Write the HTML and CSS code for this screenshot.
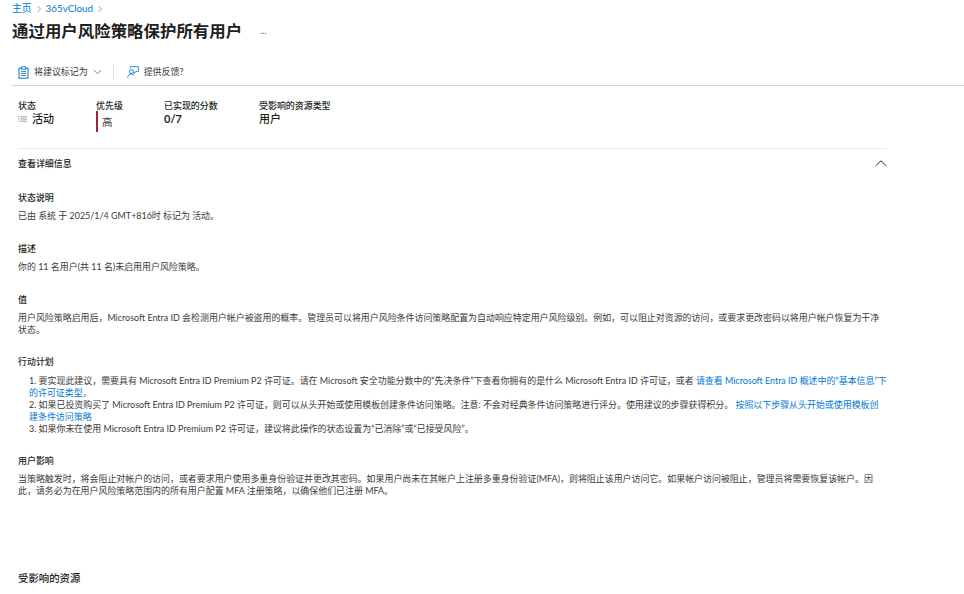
FILE: index.html
```html
<!DOCTYPE html>
<html lang="zh-CN">
<head>
    <meta charset="UTF-8">
    <meta name="viewport" content="width=device-width, initial-scale=1.0">
    <title>通过用户风险策略保护所有用户</title>
    <link rel="stylesheet" href="styles.css">
</head>
<body>
    <nav class="breadcrumb">
        <a href="#">主页</a>
        <svg class="crumb-sep" width="6" height="8" viewBox="0 0 6 8"><path d="M1.5 1 L4.5 4 L1.5 7" fill="none" stroke="#8a8886" stroke-width="0.8"/></svg>
        <a href="#">365vCloud</a>
        <svg class="crumb-sep" width="6" height="8" viewBox="0 0 6 8"><path d="M1.5 1 L4.5 4 L1.5 7" fill="none" stroke="#8a8886" stroke-width="0.8"/></svg>
    </nav>

    <div class="title-row">
        <h1>通过用户风险策略保护所有用户</h1>
        <span class="more">...</span>
    </div>

    <div class="toolbar">
        <button class="tool">
            <svg width="11" height="13" viewBox="0 0 11 13"><rect x="1" y="2.2" width="9" height="10" fill="none" stroke="#0078d4" stroke-width="1"/><rect x="3.6" y="0.8" width="3.8" height="2.4" fill="#fff" stroke="#0078d4" stroke-width="0.9"/><path d="M3 5.6 H8 M3 7.6 H8 M3 9.6 H8" stroke="#3b6f96" stroke-width="0.9"/></svg>
            <span>将建议标记为</span>
            <svg class="tool-chevron" width="9" height="6" viewBox="0 0 9 6"><path d="M0.8 1 L4.5 4.8 L8.2 1" fill="none" stroke="#605e5c" stroke-width="0.8"/></svg>
        </button>
        <span class="tool-divider"></span>
        <button class="tool">
            <svg width="12" height="12" viewBox="0 0 12 12"><circle cx="4.4" cy="5.6" r="2" fill="none" stroke="#0078d4" stroke-width="0.9"/><path d="M0.6 11.4 C1 9 2.6 8 4.4 8 C5.4 8 6.4 8.4 7 9.2" fill="none" stroke="#0078d4" stroke-width="0.9"/><path d="M3.4 2.2 V0.6 H11.4 V5.6 H9 L7.2 7.4 V5.6" fill="none" stroke="#0078d4" stroke-width="0.8"/></svg>
            <span>提供反馈?</span>
        </button>
    </div>

    <div class="stats">
        <div class="stat stat-status">
            <div class="stat-label">状态</div>
            <div class="stat-value"><svg class="status-icon" width="9" height="6" viewBox="0 0 9 6"><path d="M0 0.8 H1.4 M2.4 0.8 H9 M0 3 H1.4 M2.4 3 H9 M0 5.2 H1.4 M2.4 5.2 H9" stroke="#8a8886" stroke-width="0.8"/></svg>活动</div>
        </div>
        <div class="stat stat-priority">
            <div class="stat-label">优先级</div>
            <div class="priority-value">高</div>
        </div>
        <div class="stat stat-score">
            <div class="stat-label">已实现的分数</div>
            <div class="stat-value score-value">0/7</div>
        </div>
        <div class="stat">
            <div class="stat-label">受影响的资源类型</div>
            <div class="stat-value">用户</div>
        </div>
    </div>

    <section class="details">
        <div class="details-head">
            <h2>查看详细信息</h2>
            <svg width="12" height="7" viewBox="0 0 12 7"><path d="M0.5 6 L6 0.8 L11.5 6" fill="none" stroke="#323130" stroke-width="1"/></svg>
        </div>

        <div class="block block-first">
            <h3>状态说明</h3>
            <p>已由 系统 于 2025/1/4 GMT+816时 标记为 活动。</p>
        </div>
        <div class="block">
            <h3>描述</h3>
            <p>你的 11 名用户(共 11 名)未启用用户风险策略。</p>
        </div>
        <div class="block">
            <h3>值</h3>
            <p>用户风险策略启用后，Microsoft Entra ID 会检测用户帐户被盗用的概率。管理员可以将用户风险条件访问策略配置为自动响应特定用户风险级别。例如，可以阻止对资源的访问，或要求更改密码以将用户帐户恢复为干净<br>状态。</p>
        </div>
        <div class="block block-plan">
            <h3 class="plan-title">行动计划</h3>
            <div class="steps">
                1. 要实现此建议，需要具有 Microsoft Entra ID Premium P2 许可证。请在 Microsoft 安全功能分数中的“先决条件”下查看你拥有的是什么 Microsoft Entra ID 许可证，或者 <a href="#">请查看 Microsoft Entra ID 概述中的“基本信息”下<br>的许可证类型。</a><br>
                2. 如果已投资购买了 Microsoft Entra ID Premium P2 许可证，则可以从头开始或使用模板创建条件访问策略。注意: 不会对经典条件访问策略进行评分。使用建议的步骤获得积分。 <a href="#">按照以下步骤从头开始或使用模板创<br>建条件访问策略</a><br>
                3. 如果你未在使用 Microsoft Entra ID Premium P2 许可证，建议将此操作的状态设置为“已消除”或“已接受风险”。
            </div>
        </div>
        <div class="block block-impact">
            <h3>用户影响</h3>
            <p>当策略触发时，将会阻止对帐户的访问，或者要求用户使用多重身份验证并更改其密码。如果用户尚未在其帐户上注册多重身份验证(MFA)，则将阻止该用户访问它。如果帐户访问被阻止，管理员将需要恢复该帐户。因<br>此，请务必为在用户风险策略范围内的所有用户配置 MFA 注册策略，以确保他们已注册 MFA。</p>
        </div>
    </section>

    <h2 class="resources">受影响的资源</h2>
</body>
</html>
```

FILE: styles.css
```css
body {
    margin: 0;
    background: #fff;
    color: #3b3a39;
    font-family: Lato, "Noto Sans CJK SC", sans-serif;
    font-size: 8.95px;
    line-height: 12px;
    overflow: hidden;
}

a {
    color: #0078d4;
    text-decoration: none;
}

button {
    background: none;
    border: none;
    padding: 0;
    font: inherit;
    color: inherit;
}

.breadcrumb {
    display: flex;
    align-items: center;
    gap: 4px;
    height: 12px;
    padding: 2px 0 1px 12px;
    font-size: 9.8px;
}

.crumb-sep {
    margin-top: 1px;
}

.title-row {
    display: flex;
    align-items: center;
    height: 24px;
    margin-top: 4px;
    padding-left: 12px;
}

h1 {
    margin: 0;
    font-size: 16.45px;
    line-height: 24px;
    font-weight: 600;
    color: #201f1e;
}

.more {
    margin-left: 18px;
    color: #605e5c;
    font-size: 9px;
    line-height: 8px;
}

.toolbar {
    display: flex;
    align-items: center;
    height: 24px;
    margin-top: 17px;
    margin-left: 12px;
    padding-left: 6px;
    border-bottom: 1px solid #d8d6d4;
    padding-bottom: 1px;
}

.tool {
    display: flex;
    align-items: center;
    gap: 5px;
}

.tool-divider {
    width: 1px;
    height: 14px;
    margin: 0 13px 0 11px;
    background: #e1dfdd;
}

.stats {
    display: flex;
    height: 48px;
    margin-top: 14px;
    padding-left: 18px;
}

.stat-status {
    width: 78px;
}

.stat-priority {
    width: 68px;
}

.stat-score {
    width: 95px;
}

.stat-label {
    font-weight: 500;
    color: #201f1e;
}

.stat-value {
    display: flex;
    align-items: center;
    font-size: 11px;
    font-weight: 500;
    line-height: 14px;
    color: #201f1e;
}

.score-value {
    font-weight: 700;
}

.status-icon {
    margin-right: 5px;
}

.priority-value {
    height: 21px;
    margin-top: -1px;
    padding-left: 4px;
    border-left: 2px solid #a4262c;
    font-size: 10.5px;
    line-height: 22px;
}

.details {
    width: 869px;
    margin-left: 18px;
    border-top: 1px solid #edebe9;
}

.details-head {
    display: flex;
    align-items: center;
    justify-content: space-between;
    height: 29px;
}

h2 {
    margin: 0;
    font-size: 8.95px;
    font-weight: 500;
    color: #201f1e;
}

.block {
    margin-top: 21px;
}

.block-first {
    margin-top: 14px;
}

.block-plan {
    margin-top: 20px;
}

.block-impact {
    margin-top: 20px;
}

h3 {
    margin: 0 0 6px;
    font-size: 8.95px;
    line-height: 12px;
    font-weight: 500;
    color: #201f1e;
}

.plan-title {
    margin-bottom: 7px;
}

p {
    margin: 0;
    line-height: 12px;
}

.steps {
    padding-left: 11px;
    line-height: 12px;
}

h2.resources {
    margin: 74px 0 0 18px;
    font-size: 10.4px;
    line-height: 14px;
}
```
